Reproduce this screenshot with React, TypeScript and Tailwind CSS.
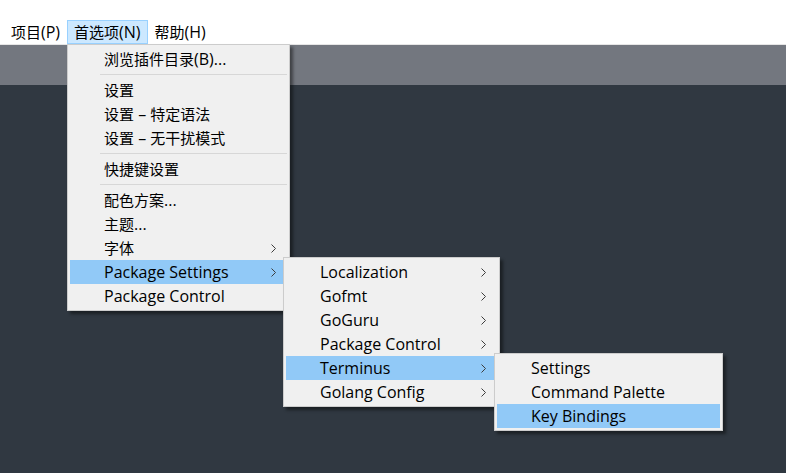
import React from "react";

type Entry = { label: string; arrow?: boolean; active?: boolean } | "sep";

const FONT = "font-['Open_Sans','Noto_Sans_CJK_SC',sans-serif]";

// latin runs render a bit larger than the CJK ones, like YaHei does
const Txt = ({ s }: { s: string }) => (
  <>
    {s.split(/([\u3000-\u9fff\uff00-\uffef]+)/).map((part, i) =>
      part ? (
        <span key={i} className={/[\u3000-\u9fff]/.test(part) ? "text-[15px]" : "text-[16px]"}>
          {part}
        </span>
      ) : null
    )}
  </>
);

const Chevron = () => (
  <svg width="5" height="9" viewBox="0 0 5 9" className="shrink-0">
    <polyline points="0.5,0.5 4.5,4.5 0.5,8.5" fill="none" stroke="#3c3c3c" strokeWidth="1" />
  </svg>
);

const Menu = ({ items, className }: { items: Entry[]; className: string }) => {
  return (
    <div
      className={`absolute border border-[#cccccc] bg-[#f0f0f0] p-[2px] shadow-[3px_3px_3px_rgba(0,0,0,0.45)] ${className}`}
    >
      {items.map((it, i) =>
        it === "sep" ? (
          <div key={i} className="h-[7px] pt-[3px] pl-[30px]">
            <div className="h-px bg-[#d7d7d7]" />
          </div>
        ) : (
          <div
            key={i}
            className={`flex h-6 items-center justify-between pl-[34px] pr-[11px] ${it.active ? "bg-[#91c9f7]" : ""}`}
          >
            <span className="leading-6 whitespace-nowrap">
              <Txt s={it.label} />
            </span>
            {it.arrow && <Chevron />}
          </div>
        )
      )}
    </div>
  );
};

const MenuBar = () => {
  const items = [
    { label: "项目(P)" },
    { label: "首选项(N)", active: true },
    { label: "帮助(H)" },
  ];
  return (
    <div className="h-[44px] bg-white pt-[20px] pl-[4px] flex">
      {items.map((item) => (
        <div
          key={item.label}
          className={`h-6 px-[6px] border flex items-center leading-6 whitespace-nowrap ${item.active ? "bg-[#cce8ff] border-[#99d1ff]" : "border-transparent"}`}
        >
          <Txt s={item.label} />
        </div>
      ))}
    </div>
  );
};

const mainItems: Entry[] = [
  { label: "浏览插件目录(B)..." },
  "sep",
  { label: "设置" },
  { label: "设置 – 特定语法" },
  { label: "设置 – 无干扰模式" },
  "sep",
  { label: "快捷键设置" },
  "sep",
  { label: "配色方案..." },
  { label: "主题..." },
  { label: "字体", arrow: true },
  { label: "Package Settings", arrow: true, active: true },
  { label: "Package Control" },
];

const packageItems: Entry[] = [
  { label: "Localization", arrow: true },
  { label: "Gofmt", arrow: true },
  { label: "GoGuru", arrow: true },
  { label: "Package Control", arrow: true },
  { label: "Terminus", arrow: true, active: true },
  { label: "Golang Config", arrow: true },
];

const terminusItems: Entry[] = [
  { label: "Settings" },
  { label: "Command Palette" },
  { label: "Key Bindings", active: true },
];

export default function App() {
  return (
    <div className={`relative w-[786px] h-[473px] flex flex-col overflow-hidden text-[15px] text-black ${FONT}`}>
      <MenuBar />
      <div className="h-[41px] bg-[#73777f] border-t border-[#e6e6e6]" />
      <div className="flex-1 bg-[#303841]" />

      <Menu items={mainItems} className="left-[67px] top-[44px] w-[223px]" />
      <Menu items={packageItems} className="left-[283px] top-[257px] w-[217px]" />
      <Menu items={terminusItems} className="left-[494px] top-[353px] w-[229px]" />
    </div>
  );
}
